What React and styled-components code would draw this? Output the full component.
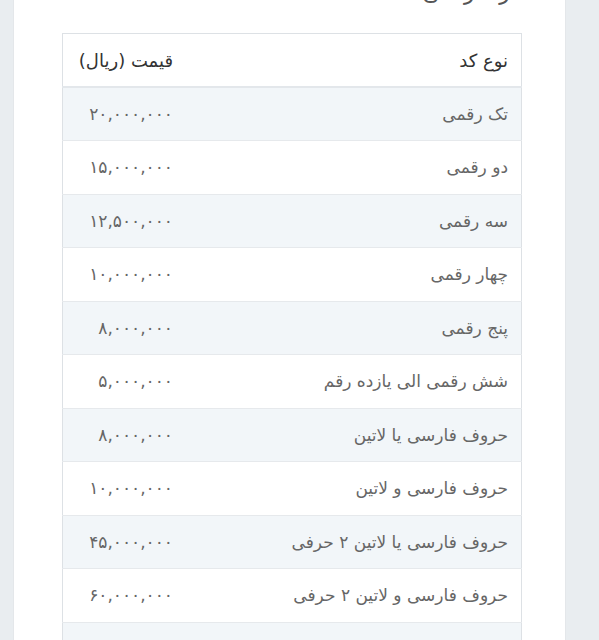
import React from 'react';
import styled, { createGlobalStyle } from 'styled-components';

const GlobalStyle = createGlobalStyle`
  html, body {
    margin: 0;
    padding: 0;
    background: #e9edf0;
  }
  body {
    direction: rtl;
    font-family: 'DejaVu Sans', 'Noto Sans', sans-serif;
    overflow: hidden;
  }
`;

const Page = styled.div`
  display: flex;
  padding: 0 33px 0 13px;
  height: 640px;
`;

const Card = styled.div`
  flex: 1;
  background: #fff;
  border-left: 1px solid #e4e7ea;
  border-right: 1px solid #e4e7ea;
  padding: 0 43px 0 48px;
`;

const Heading = styled.h3`
  margin: -19px 0 0;
  padding: 0 12px 0 0;
  height: 52px;
  font-size: 22px;
  line-height: 24px;
  font-weight: normal;
  color: #555;
`;

const Table = styled.table`
  width: 100%;
  border-collapse: collapse;
  border: 1px solid #dde1e5;
`;

const HeadCell = styled.th`
  text-align: right;
  padding: 16px 13px 14px;
  font-size: 18px;
  line-height: 22px;
  font-weight: normal;
  color: #333;
  white-space: nowrap;
  border-bottom: 2px solid #e3e7eb;
  width: ${(p) => (p.$narrow ? '97px' : 'auto')};
`;

const Row = styled.tr`
  background: ${(p) => (p.$striped ? '#f2f6f9' : '#fff')};
  border-top: 1px solid #e6e9ec;
`;

const Cell = styled.td`
  text-align: right;
  padding: 16px 13px 16px;
  font-size: 17px;
  line-height: 20.45px;
  color: #666;
  white-space: nowrap;
`;

const rows = [
  ['تک رقمی', '۲۰,۰۰۰,۰۰۰'],
  ['دو رقمی', '۱۵,۰۰۰,۰۰۰'],
  ['سه رقمی', '۱۲,۵۰۰,۰۰۰'],
  ['چهار رقمی', '۱۰,۰۰۰,۰۰۰'],
  ['پنج رقمی', '۸,۰۰۰,۰۰۰'],
  ['شش رقمی الی یازده رقم', '۵,۰۰۰,۰۰۰'],
  ['حروف فارسی یا لاتین', '۸,۰۰۰,۰۰۰'],
  ['حروف فارسی و لاتین', '۱۰,۰۰۰,۰۰۰'],
  ['حروف فارسی یا لاتین ۲ حرفی', '۴۵,۰۰۰,۰۰۰'],
  ['حروف فارسی و لاتین ۲ حرفی', '۶۰,۰۰۰,۰۰۰'],
  ['حروف فارسی یا لاتین ۳ حرفی (رند خاص)', '۳۰,۰۰۰,۰۰۰'],
];

export default function App() {
  return (
    <>
      <GlobalStyle />
      <Page>
        <Card>
          <Heading>رند رقمی ۱۱۰ ۱۱۰</Heading>
          <Table>
            <thead>
              <tr>
                <HeadCell>نوع کد</HeadCell>
                <HeadCell $narrow>قیمت (ریال)</HeadCell>
              </tr>
            </thead>
            <tbody>
              {rows.map(([name, price], i) => (
                <Row key={name} $striped={i % 2 === 0}>
                  <Cell>{name}</Cell>
                  <Cell>{price}</Cell>
                </Row>
              ))}
            </tbody>
          </Table>
        </Card>
      </Page>
    </>
  );
}
